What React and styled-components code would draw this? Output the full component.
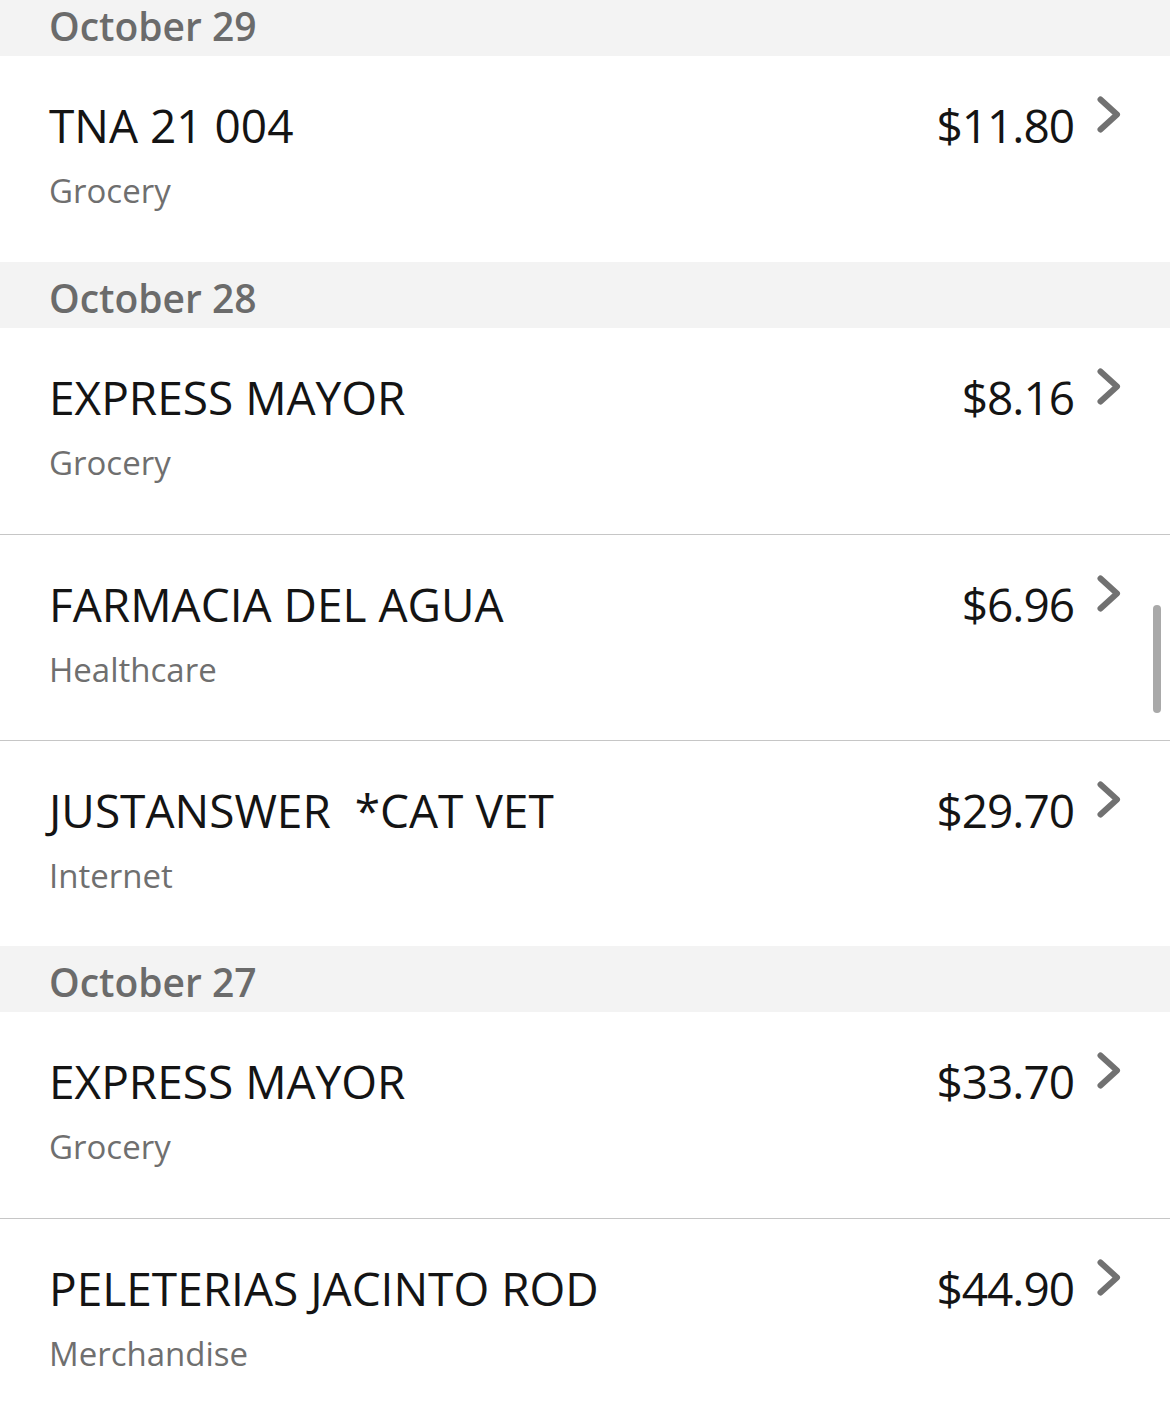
import React from 'react';
import styled, { createGlobalStyle } from 'styled-components';

const GlobalStyle = createGlobalStyle`
    body {
        margin:0;
        background:#ffffff;
        font-family:"Open Sans", "Noto Sans", sans-serif;
    }
`;

const Page = styled.div`
    position:relative;
    width:1170px;
    height:1414px;
    overflow:hidden;
    background:#ffffff;
`;

const List = styled.div`
    margin-top:-10px;
    display:flex;
    flex-direction:column;
`;

const DayHeader = styled.div`
    height:66px;
    box-sizing:border-box;
    padding:6px 0 0 49px;
    line-height:60px;
    background:#f3f3f3;
    color:#6b6b6b;
    font-size:39px;
    font-weight:600;
`;

const Row = styled.div`
    height:206px;
    box-sizing:border-box;
    padding:41px 48px 0 49px;
    display:flex;
    justify-content:space-between;
    align-items:flex-start;
    border-top:${p => (p.$divider ? '1px solid #c6c6c6' : 'none')};
`;

const Info = styled.div`
    display:flex;
    flex-direction:column;
`;

const Title = styled.div`
    font-size:46px;
    line-height:56px;
    color:#141414;
    white-space:pre;
`;

const Category = styled.div`
    margin-top:18px;
    font-size:33px;
    line-height:40px;
    color:#6f6f6f;
`;

const Right = styled.div`
    display:flex;
    align-items:flex-start;
    gap:22px;
`;

const Amount = styled.div`
    font-size:46px;
    line-height:56px;
    letter-spacing:-1px;
    color:#141414;
`;

const Chevron = styled.svg`
    width:26px;
    height:38px;
    margin-top:-2px;
`;

const Scrollbar = styled.div`
    position:absolute;
    left:1153px;
    top:605px;
    width:8px;
    height:108px;
    border-radius:4px;
    background:#a9a9a9;
`;

const days = [
    {
        date: 'October 29',
        items: [{ name: 'TNA 21 004', cat: 'Grocery', amount: '$11.80' }],
    },
    {
        date: 'October 28',
        items: [
            { name: 'EXPRESS MAYOR', cat: 'Grocery', amount: '$8.16' },
            { name: 'FARMACIA DEL AGUA', cat: 'Healthcare', amount: '$6.96' },
            { name: 'JUSTANSWER  *CAT VET', cat: 'Internet', amount: '$29.70' },
        ],
    },
    {
        date: 'October 27',
        items: [
            { name: 'EXPRESS MAYOR', cat: 'Grocery', amount: '$33.70' },
            { name: 'PELETERIAS JACINTO ROD', cat: 'Merchandise', amount: '$44.90' },
        ],
    },
];

const Arrow = () => (
    <Chevron viewBox="0 0 26 38">
        <path d="M4.5 4.5 L21 19.5 L4.5 34.5" fill="none" stroke="#717171" strokeWidth="6" strokeLinecap="round" strokeLinejoin="round" />
    </Chevron>
);

const App = () => {
  return (
    <>
    <GlobalStyle/>
    <Page>
        <List>
            {days.map(day => (
                <React.Fragment key={day.date}>
                    <DayHeader>{day.date}</DayHeader>
                    {day.items.map((item, i) => (
                        <Row key={i} $divider={i > 0}>
                            <Info>
                                <Title>{item.name}</Title>
                                <Category>{item.cat}</Category>
                            </Info>
                            <Right>
                                <Amount>{item.amount}</Amount>
                                <Arrow/>
                            </Right>
                        </Row>
                    ))}
                </React.Fragment>
            ))}
        </List>
        <Scrollbar/>
    </Page>
    </>
  )
}

export default App;
